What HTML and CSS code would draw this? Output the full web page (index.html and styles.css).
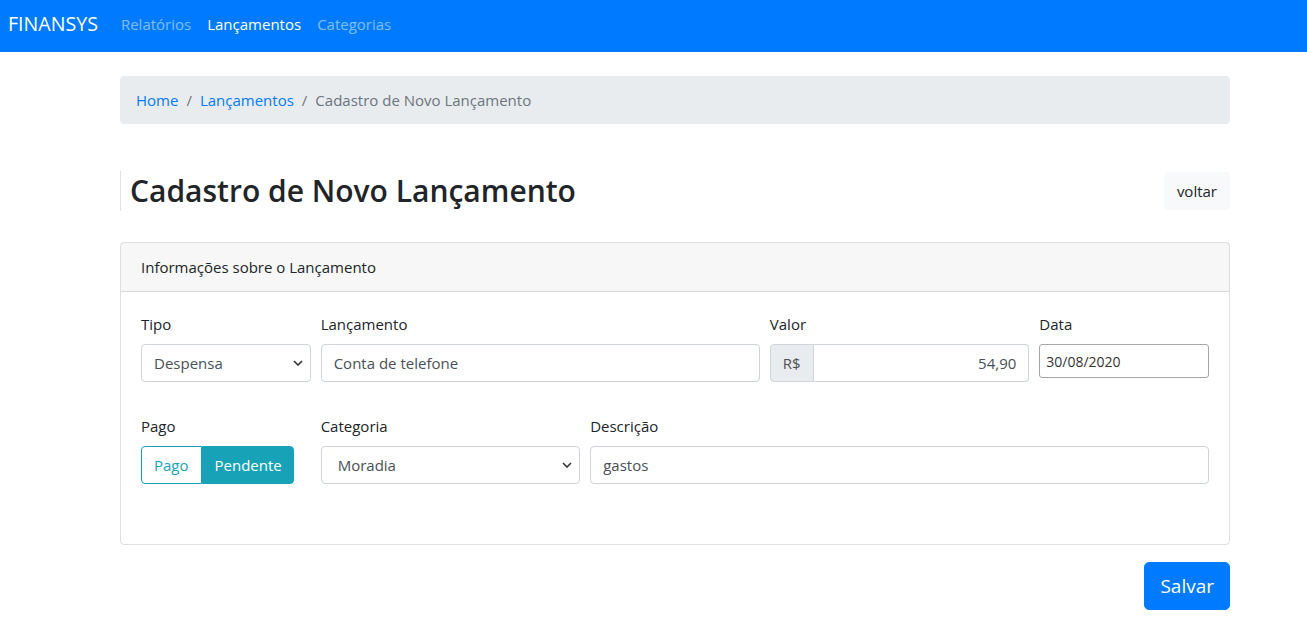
FILE: index.html
```html
<!DOCTYPE html>
<html lang="pt-BR">
<head>
<meta charset="utf-8">
<title>FINANSYS</title>
<link rel="stylesheet" href="styles.css">
</head>
<body>
<nav class="navbar">
  <a class="brand" href="#">FINANSYS</a>
  <ul class="nav-links">
    <li><a href="#">Relatórios</a></li>
    <li><a class="active" href="#">Lançamentos</a></li>
    <li><a href="#">Categorias</a></li>
  </ul>
</nav>

<main class="container">
  <ol class="breadcrumb">
    <li><a href="#">Home</a></li>
    <li class="sep">/</li>
    <li><a href="#">Lançamentos</a></li>
    <li class="sep">/</li>
    <li class="current">Cadastro de Novo Lançamento</li>
  </ol>

  <div class="page-header">
    <h1 class="page-title">Cadastro de Novo Lançamento</h1>
    <button class="btn btn-light">voltar</button>
  </div>

  <form class="card">
    <div class="card-header">Informações sobre o Lançamento</div>
    <div class="card-body">
      <div class="form-row">
        <div class="form-group col-2">
          <label>Tipo</label>
          <div class="select-wrap">
            <select class="form-control select"><option>Despensa</option></select>
            <svg class="chev" width="10" height="6" viewBox="0 0 10 6"><path d="M1 1l4 4 4-4" fill="none" stroke="#333" stroke-width="1.6"/></svg>
          </div>
        </div>
        <div class="form-group col-5">
          <label>Lançamento</label>
          <input class="form-control" type="text" value="Conta de telefone">
        </div>
        <div class="form-group col-3">
          <label>Valor</label>
          <div class="input-group">
            <span class="input-group-text">R$</span>
            <input class="form-control right" type="text" value="54,90">
          </div>
        </div>
        <div class="form-group col-2">
          <label>Data</label>
          <input class="calendar" type="text" value="30/08/2020">
        </div>
      </div>

      <div class="form-row row-2">
        <div class="form-group col-2">
          <label>Pago</label>
          <div class="btn-group">
            <span class="btn btn-outline-info">Pago</span>
            <span class="btn btn-info">Pendente</span>
          </div>
        </div>
        <div class="form-group col-3">
          <label>Categoria</label>
          <div class="select-wrap">
            <select class="form-control select cat"><option>Moradia</option></select>
            <svg class="chev" width="10" height="6" viewBox="0 0 10 6"><path d="M1 1l4 4 4-4" fill="none" stroke="#333" stroke-width="1.6"/></svg>
          </div>
        </div>
        <div class="form-group col-7">
          <label>Descrição</label>
          <input class="form-control" type="text" value="gastos">
        </div>
      </div>
    </div>
  </form>

  <div class="actions">
    <button class="btn btn-primary btn-lg">Salvar</button>
  </div>
</main>
</body>
</html>
```

FILE: styles.css
```css
* { box-sizing: border-box; }
html, body {
  margin: 0;
  padding: 0;
  font-family: "Open Sans", "Noto Sans", sans-serif;
  font-size: 16px;
  line-height: 1.5;
  color: #212529;
  background: #fff;
}
a { text-decoration: none; color: #007bff; }

.navbar {
  height: 52px;
  background: #007bff;
  display: flex;
  align-items: center;
  padding: 0 8px 4px;
}
.brand {
  color: #fff;
  font-size: 19.6px;
  margin-right: 15px;
}
.nav-links {
  list-style: none;
  display: flex;
  margin: 0;
  padding: 0;
}
.nav-links a {
  display: block;
  padding: 8px 8px;
  color: rgba(255,255,255,.5);
  font-size: 15px;
}
.nav-links a.active { color: #fff; }

.container {
  width: 1110px;
  margin-left: 120px;
  padding-top: 24px;
}

.breadcrumb {
  list-style: none;
  margin: 0;
  padding: 12px 16px;
  height: 48px;
  background: #e9ecef;
  border-radius: 4px;
  display: flex;
  font-size: 15px;
  line-height: 25px;
}
.breadcrumb li.sep { color: #6c757d; padding: 0 8px; }
.breadcrumb .current { color: #6c757d; }

.page-header {
  display: flex;
  justify-content: space-between;
  align-items: center;
  margin-top: 48px;
  height: 38px;
}
.page-title {
  margin: 0;
  font-size: 30px;
  font-weight: 600;
  line-height: 40px;
  border-left: 1px solid #dee2e6;
  padding-left: 9px;
}

.btn {
  display: inline-block;
  font-family: inherit;
  font-size: 15px;
  line-height: 24px;
  padding: 6px 12px;
  border: 1px solid transparent;
  border-radius: 4px;
  cursor: pointer;
}
.btn-light { background: #f8f9fa; border-color: #f8f9fa; color: #212529; }
.btn-primary { background: #007bff; border-color: #007bff; color: #fff; }
.btn-lg { font-size: 19px; padding: 8px 15px; line-height: 30px; border-radius: 5px; }

.card {
  display: block;
  margin-top: 32px;
  border: 1px solid rgba(0,0,0,.125);
  border-radius: 4px;
}
.card-header {
  padding: 12px 20px;
  height: 49px;
  background: rgba(0,0,0,.03);
  border-bottom: 1px solid rgba(0,0,0,.125);
  font-size: 15px;
  line-height: 24px;
}
.card-body {
  padding: 20px 20px 44px;
}

.form-row {
  display: flex;
  margin: 0 -5px;
}
.row-2 { margin-top: 16px; }
.form-group { padding: 0 5px; margin-bottom: 16px; }
.col-2 { width: 16.6667%; }
.col-3 { width: 25%; }
.col-5 { width: 41.6667%; }
.col-7 { width: 58.3333%; }

label {
  display: block;
  margin-bottom: 8px;
  font-size: 15px;
  line-height: 24px;
  height: 24px;
}

.form-control {
  display: block;
  width: 100%;
  height: 38px;
  padding: 6px 12px;
  font-family: inherit;
  font-size: 15px;
  line-height: 24px;
  color: #495057;
  background: #fff;
  border: 1px solid #ced4da;
  border-radius: 4px;
  outline: none;
}
.right { text-align: right; }

.select-wrap { position: relative; }
.select {
  -webkit-appearance: none;
  appearance: none;
  padding-left: 12px;
}
.select.cat { padding-left: 16px; }
.chev {
  position: absolute;
  right: 8px;
  top: 16px;
  pointer-events: none;
}

.input-group { display: flex; }
.input-group-text {
  display: flex;
  align-items: center;
  height: 38px;
  padding: 6px 12px;
  background: #e9ecef;
  border: 1px solid #ced4da;
  border-radius: 4px 0 0 4px;
  color: #495057;
  font-size: 15px;
}
.input-group .form-control {
  border-left: 0;
  border-radius: 0 4px 4px 0;
}

.calendar {
  display: block;
  width: 100%;
  height: 34px;
  padding: 4px 6px;
  font-family: inherit;
  font-size: 14px;
  color: #333;
  background: #fff;
  border: 1px solid #a6a6a6;
  border-radius: 3px;
  outline: none;
}

.btn-group { display: flex; }
.btn-group .btn { height: 38px; font-size: 15px; padding: 6px 12px 6px 12px; }
.btn-group .btn-info { padding-right: 11px; }
.btn-outline-info { color: #17a2b8; border-color: #17a2b8; border-radius: 4px 0 0 4px; }
.btn-info { color: #fff; background: #17a2b8; border-color: #17a2b8; border-radius: 0 4px 4px 0; }

.actions {
  display: flex;
  justify-content: flex-end;
  margin-top: 17px;
}
```
